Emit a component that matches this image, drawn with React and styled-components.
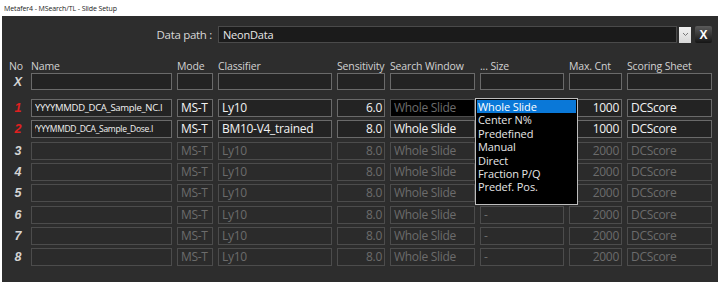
import React from 'react';
import styled, { createGlobalStyle } from 'styled-components';

const GlobalStyle = createGlobalStyle`
  body {
    margin: 0;
    background: #ffffff;
    font-family: "Open Sans", "Noto Sans", sans-serif;
  }
`

const cols = '16px 141px 36px 114px 48px 85px 84px 53px 85px'

const Window = styled.div`
  width: 720px;
  height: 282px;
  display: flex;
  flex-direction: column;
  overflow: hidden;
`
const TitleBar = styled.div`
  height: 16px;
  flex: none;
  display: flex;
  align-items: center;
  padding-left: 4px;
  font-size: 7px;
  letter-spacing: -0.1px;
  color: #222;
  background: #fff;
`
const Panel = styled.div`
  flex: 1;
  margin: 0 2px;
  background: #2d2d2d;
  padding: 10px 6px 0 8px;
  color: #d6d6d6;
`
const PathRow = styled.div`
  display: flex;
  align-items: center;
  height: 17px;
`
const PathLabel = styled.div`
  width: 202px;
  text-align: right;
  font-size: 11.5px;
  letter-spacing: -0.3px;
  padding-right: 6px;
  color: #d8d8d8;
`
const PathInput = styled.div`
  flex: 1;
  height: 17px;
  box-sizing: border-box;
  background: #1b1b1b;
  border: 1px solid #4a4a4a;
  font-size: 11px;
  letter-spacing: -0.2px;
  line-height: 15px;
  padding-left: 4px;
  color: #e8e8e8;
`
const ArrowButton = styled.div`
  width: 12px;
  height: 16px;
  margin-left: 2px;
  background: linear-gradient(#f0f0f0, #d8d8d8);
  display: flex;
  align-items: center;
  justify-content: center;
`
const CloseButton = styled.div`
  width: 17px;
  height: 17px;
  margin-left: 4px;
  background: linear-gradient(#5a5a5a, #151515);
  border-radius: 2px;
  color: #fff;
  font-family: "Liberation Sans", sans-serif;
  font-weight: bold;
  font-size: 12px;
  display: flex;
  align-items: center;
  justify-content: center;
`
const Grid = styled.div`
  display: grid;
  grid-template-columns: ${cols};
  column-gap: 5px;
  align-items: center;
`
const HeaderRow = styled(Grid)`
  margin-top: 16px;
  height: 14px;
  font-size: 10.5px;
  letter-spacing: -0.15px;
  color: #d2d2d2;
`
const HeaderCell = styled.div`
  white-space: nowrap;
  ${p => p.$center && 'text-align: center; margin-left: -4px;'}
`
const FilterRow = styled(Grid)`
  height: 17px;
  margin-bottom: 9px;
`
const Rows = styled.div`
  display: flex;
  flex-direction: column;
  gap: 3.33px;
`
const RowNo = styled.div`
  font-family: "Liberation Sans", sans-serif;
  font-weight: bold;
  font-style: italic;
  font-size: 12.5px;
  text-align: center;
  color: ${p => p.$red ? '#e02020' : '#d4d4d4'};
`
const Cell = styled.div`
  position: relative;
  height: ${p => p.$h || 18}px;
  box-sizing: border-box;
  border: 1px solid ${p => p.$on ? '#6a6a6a' : '#4c4c4c'};
  background: ${p => p.$black ? '#000' : p.$on ? '#232323' : '#2b2b2b'};
  color: ${p => p.$on ? '#f2f2f2' : '#6c6c6c'};
  font-size: ${p => p.$fs || 12}px;
  letter-spacing: -0.3px;
  line-height: ${p => (p.$h || 18) - 2}px;
  padding: 0 2px 0 3px;
  white-space: nowrap;
  overflow: visible;
  text-align: ${p => p.$right ? 'right' : 'left'};
`
const Clip = styled.div`
  overflow: hidden;
  text-indent: ${p => p.$shift || 0}px;
`
const Menu = styled.div`
  position: absolute;
  left: -6px;
  top: -2px;
  width: 103px;
  height: 107px;
  box-sizing: border-box;
  background: #000;
  border: 1px solid #bdbdbd;
  padding: 1px;
  z-index: 5;
`
const MenuItem = styled.div`
  height: 13.4px;
  line-height: 13.4px;
  font-size: 11px;
  letter-spacing: -0.1px;
  padding-left: 1px;
  color: ${p => p.$sel ? '#fff' : '#e6e6e6'};
  background: ${p => p.$sel ? '#0a78d8' : 'transparent'};
`

const sizeOptions = ['Whole Slide', 'Center N%', 'Predefined', 'Manual', 'Direct', 'Fraction P/Q', 'Predef. Pos.']

const rows = [
  { no: 1, name: 'YYYYMMDD_DCA_Sample_NC.I', nameFs: 9.5, mode: 'MS-T', cls: 'Ly10', sens: '6.0', sw: 'Whole Slide', max: '1000', sheet: 'DCScore', on: true, menu: true },
  { no: 2, name: 'YYYYMMDD_DCA_Sample_Dose.I', nameFs: 8.5, shift: -3, mode: 'MS-T', cls: 'BM10-V4_trained', sens: '8.0', sw: 'Whole Slide', max: '1000', sheet: 'DCScore', on: true },
  ...[3, 4, 5, 6, 7, 8].map(no => ({ no, name: '', mode: 'MS-T', cls: 'Ly10', sens: '8.0', sw: 'Whole Slide', size: '-', max: '2000', sheet: 'DCScore' })),
]

function App() {
  return (
    <Window>
      <GlobalStyle />
      <TitleBar>Metafer4 - MSearch/TL - Slide Setup</TitleBar>
      <Panel>
        <PathRow>
          <PathLabel>Data path :</PathLabel>
          <PathInput>NeonData</PathInput>
          <ArrowButton>
            <svg width="7" height="5" viewBox="0 0 7 5">
              <path d="M1 1 L3.5 3.5 L6 1" fill="none" stroke="#777" strokeWidth="1" />
            </svg>
          </ArrowButton>
          <CloseButton>X</CloseButton>
        </PathRow>
        <HeaderRow>
          <HeaderCell $center>No</HeaderCell>
          <HeaderCell>Name</HeaderCell>
          <HeaderCell>Mode</HeaderCell>
          <HeaderCell>Classifier</HeaderCell>
          <HeaderCell>Sensitivity</HeaderCell>
          <HeaderCell>Search Window</HeaderCell>
          <HeaderCell>... Size</HeaderCell>
          <HeaderCell>Max. Cnt</HeaderCell>
          <HeaderCell>Scoring Sheet</HeaderCell>
        </HeaderRow>
        <FilterRow>
          <RowNo>X</RowNo>
          {Array.from({ length: 8 }).map((_, i) => <Cell key={i} $h={17} $on />)}
        </FilterRow>
        <Rows>
          {rows.map(r => (
            <Grid key={r.no}>
              <RowNo $red={r.on}>{r.no}</RowNo>
              <Cell $on={r.on} $fs={r.nameFs}><Clip $shift={r.shift}>{r.name}</Clip></Cell>
              <Cell $on={r.on}>{r.mode}</Cell>
              <Cell $on={r.on}>{r.cls}</Cell>
              <Cell $on={r.on} $right>{r.sens}</Cell>
              <Cell $on={r.on && !r.menu} $black={r.menu}>{r.sw}</Cell>
              <Cell $on={r.on}>
                {r.size}
                {r.menu && (
                  <Menu>
                    {sizeOptions.map((o, i) => <MenuItem key={o} $sel={i === 0}>{o}</MenuItem>)}
                  </Menu>
                )}
              </Cell>
              <Cell $on={r.on} $right>{r.max}</Cell>
              <Cell $on={r.on}>{r.sheet}</Cell>
            </Grid>
          ))}
        </Rows>
      </Panel>
    </Window>
  )
}

export default App;
